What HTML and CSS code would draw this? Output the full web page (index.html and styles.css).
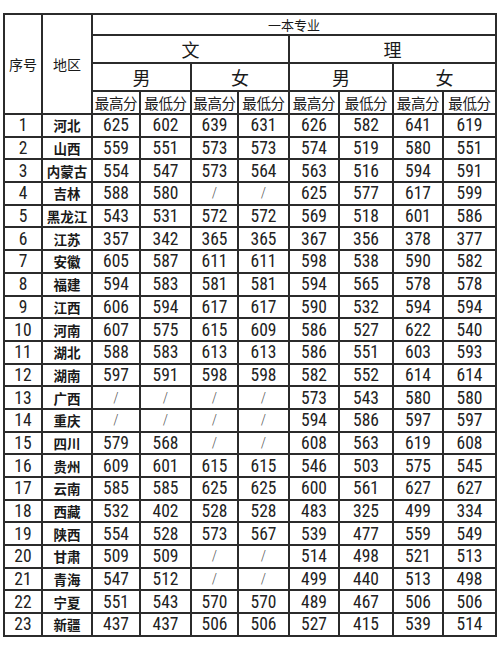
FILE: index.html
```html
<!DOCTYPE html>
<html lang="zh">
<head>
<meta charset="utf-8">
<link rel="stylesheet" href="styles.css">
</head>
<body>
<table class="score">
<colgroup>
<col class="c-no"><col class="c-area">
<col class="c1"><col class="c2"><col class="c3"><col class="c4">
<col class="c5"><col class="c6"><col class="c7"><col class="c8">
</colgroup>
<thead>
<tr class="h1"><th rowspan="4" class="hl">序号</th><th rowspan="4" class="hl">地区</th><th colspan="8" class="top">一本专业</th></tr>
<tr class="h2"><th colspan="4" class="big">文</th><th colspan="4" class="big">理</th></tr>
<tr class="h3"><th colspan="2" class="big">男</th><th colspan="2" class="big">女</th><th colspan="2" class="big">男</th><th colspan="2" class="big">女</th></tr>
<tr class="h4"><th class="sub">最高分</th><th class="sub">最低分</th><th class="sub">最高分</th><th class="sub">最低分</th><th class="sub">最高分</th><th class="sub">最低分</th><th class="sub">最高分</th><th class="sub">最低分</th></tr>
</thead>
<tbody>
<tr><td>1</td><td class="area">河北</td><td>625</td><td>602</td><td>639</td><td>631</td><td>626</td><td>582</td><td>641</td><td>619</td></tr>
<tr><td>2</td><td class="area">山西</td><td>559</td><td>551</td><td>573</td><td>573</td><td>574</td><td>519</td><td>580</td><td>551</td></tr>
<tr><td>3</td><td class="area">内蒙古</td><td>554</td><td>547</td><td>573</td><td>564</td><td>563</td><td>516</td><td>594</td><td>591</td></tr>
<tr><td>4</td><td class="area">吉林</td><td>588</td><td>580</td><td class="na">/</td><td class="na">/</td><td>625</td><td>577</td><td>617</td><td>599</td></tr>
<tr><td>5</td><td class="area">黑龙江</td><td>543</td><td>531</td><td>572</td><td>572</td><td>569</td><td>518</td><td>601</td><td>586</td></tr>
<tr><td>6</td><td class="area">江苏</td><td>357</td><td>342</td><td>365</td><td>365</td><td>367</td><td>356</td><td>378</td><td>377</td></tr>
<tr><td>7</td><td class="area">安徽</td><td>605</td><td>587</td><td>611</td><td>611</td><td>598</td><td>538</td><td>590</td><td>582</td></tr>
<tr><td>8</td><td class="area">福建</td><td>594</td><td>583</td><td>581</td><td>581</td><td>594</td><td>565</td><td>578</td><td>578</td></tr>
<tr><td>9</td><td class="area">江西</td><td>606</td><td>594</td><td>617</td><td>617</td><td>590</td><td>532</td><td>594</td><td>594</td></tr>
<tr><td>10</td><td class="area">河南</td><td>607</td><td>575</td><td>615</td><td>609</td><td>586</td><td>527</td><td>622</td><td>540</td></tr>
<tr><td>11</td><td class="area">湖北</td><td>588</td><td>583</td><td>613</td><td>613</td><td>586</td><td>551</td><td>603</td><td>593</td></tr>
<tr><td>12</td><td class="area">湖南</td><td>597</td><td>591</td><td>598</td><td>598</td><td>582</td><td>552</td><td>614</td><td>614</td></tr>
<tr><td>13</td><td class="area">广西</td><td class="na">/</td><td class="na">/</td><td class="na">/</td><td class="na">/</td><td>573</td><td>543</td><td>580</td><td>580</td></tr>
<tr><td>14</td><td class="area">重庆</td><td class="na">/</td><td class="na">/</td><td class="na">/</td><td class="na">/</td><td>594</td><td>586</td><td>597</td><td>597</td></tr>
<tr><td>15</td><td class="area">四川</td><td>579</td><td>568</td><td class="na">/</td><td class="na">/</td><td>608</td><td>563</td><td>619</td><td>608</td></tr>
<tr><td>16</td><td class="area">贵州</td><td>609</td><td>601</td><td>615</td><td>615</td><td>546</td><td>503</td><td>575</td><td>545</td></tr>
<tr><td>17</td><td class="area">云南</td><td>585</td><td>585</td><td>625</td><td>625</td><td>600</td><td>561</td><td>627</td><td>627</td></tr>
<tr><td>18</td><td class="area">西藏</td><td>532</td><td>402</td><td>528</td><td>528</td><td>483</td><td>325</td><td>499</td><td>334</td></tr>
<tr><td>19</td><td class="area">陕西</td><td>554</td><td>528</td><td>573</td><td>567</td><td>539</td><td>477</td><td>559</td><td>549</td></tr>
<tr><td>20</td><td class="area">甘肃</td><td>509</td><td>509</td><td class="na">/</td><td class="na">/</td><td>514</td><td>498</td><td>521</td><td>513</td></tr>
<tr><td>21</td><td class="area">青海</td><td>547</td><td>512</td><td class="na">/</td><td class="na">/</td><td>499</td><td>440</td><td>513</td><td>498</td></tr>
<tr><td>22</td><td class="area">宁夏</td><td>551</td><td>543</td><td>570</td><td>570</td><td>489</td><td>467</td><td>506</td><td>506</td></tr>
<tr><td>23</td><td class="area">新疆</td><td>437</td><td>437</td><td>506</td><td>506</td><td>527</td><td>415</td><td>539</td><td>514</td></tr>
</tbody>
</table>
</body>
</html>
```

FILE: styles.css
```css
html, body {
  margin: 0;
  padding: 0;
  background: #fff;
}
body {
  padding: 13px 0 0 3px;
  font-family: Roboto, "Noto Sans CJK SC", sans-serif;
  color: #1a1a1a;
}
.score {
  border-collapse: collapse;
  table-layout: fixed;
  width: 494px;
}
.score th, .score td {
  border: 2px solid #2b2b2b;
  padding: 0;
  text-align: center;
  vertical-align: middle;
  overflow: hidden;
  white-space: nowrap;
}
.c-no { width: 38px; }
.c-area { width: 50px; }
.c1 { width: 48px; }
.c2 { width: 51px; }
.c3 { width: 47px; }
.c4 { width: 51px; }
.c5 { width: 50px; }
.c6 { width: 54px; }
.c7 { width: 50px; }
.c8 { width: 53px; }
.h1 { height: 21px; }
.h2 { height: 28px; }
.h3 { height: 27px; }
.h4 { height: 23px; }
th {
  font-weight: 400;
  font-family: "Noto Sans CJK SC", sans-serif;
}
.hl { font-size: 14px; }
.top { font-size: 13px; }
.big { font-size: 18px; }
.sub { font-size: 14.5px; letter-spacing: -0.3px; }
tbody tr { height: 22.7px; }
td {
  font-size: 17.5px;
  font-stretch: 75%;
  line-height: 18px;
  color: #222;
}
td.area {
  font-family: "Noto Sans CJK SC", sans-serif;
  font-weight: 700;
  font-size: 13.5px;
  color: #1a1a1a;
}
td.na {
  font-weight: 300;
  color: #555;
  font-size: 15px;
}
```
